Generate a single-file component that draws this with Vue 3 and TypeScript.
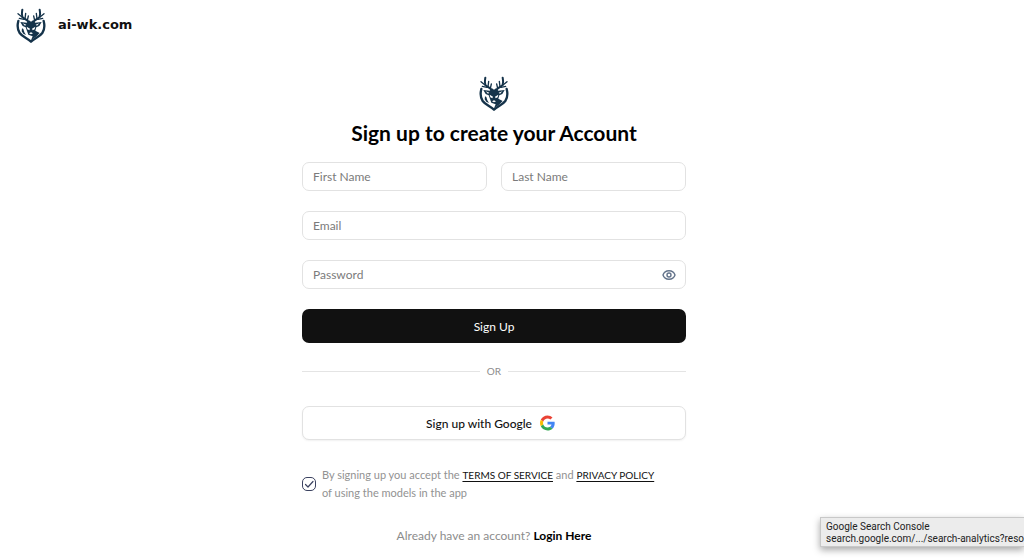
<script setup lang="ts">
import { ref } from 'vue'

const firstName = ref('')
const lastName = ref('')
const email = ref('')
const password = ref('')
const showPassword = ref(false)
const accepted = ref(true)
</script>

<template>
  <div class="page">
    <svg class="symbols" aria-hidden="true">
      <symbol id="stag" viewBox="0 0 90 108">
        <g fill="none" stroke="#15334a" stroke-linecap="round" stroke-linejoin="round">
          <path stroke-width="7" d="M7 42C4 54 4 68 11 78C19 89 34 93 45 104C56 93 71 89 79 78C86 68 86 54 83 42" />
          <path stroke-width="6" d="M38 46C35 36 24 38 19 29C16 22 18 16 19 8M52 46C55 36 66 38 71 29C74 22 72 16 71 8" />
          <path stroke-width="4" d="M18 30L6 20M27 36L29 19M34 40L37 27M72 30L84 20M63 36L61 19M56 40L53 27M24 37L10 34M66 37L80 34" />
        </g>
        <path fill="#15334a" d="M13 45L32 47L39 40L45 44L51 40L58 47L77 45L70 57L61 61L58 71L71 78L60 89L45 100L50 88L37 83L33 72L29 61L20 57Z" />
        <path fill="#15334a" d="M18 64L22 66L25 76L30 84L22 80L17 73Z" />
        <path fill="#fff" d="M20 49L31 53L27 56ZM70 49L59 53L63 56ZM32 59L42 65L40 70L34 67ZM58 59L48 65L50 70L56 67ZM39 79L45 76L51 79L45 82Z" />
      </symbol>
    </svg>

    <header class="top">
      <a class="brand" href="#">
        <svg class="stag" aria-hidden="true"><use href="#stag" /></svg>
        <span>ai-wk.com</span>
      </a>
    </header>

    <main class="main">
      <form class="form" @submit.prevent>
        <svg class="stag" aria-hidden="true"><use href="#stag" /></svg>
        <h1>Sign up to create your Account</h1>

        <div class="fields">
          <div class="names">
            <input v-model="firstName" class="field" type="text" placeholder="First Name" aria-label="First Name" />
            <input v-model="lastName" class="field" type="text" placeholder="Last Name" aria-label="Last Name" />
          </div>
          <input v-model="email" class="field" type="email" placeholder="Email" aria-label="Email" />
          <div class="password">
            <input v-model="password" class="field" :type="showPassword ? 'text' : 'password'" placeholder="Password" aria-label="Password" />
            <button class="eye" type="button" aria-label="Show password" @click="showPassword = !showPassword">
              <svg viewBox="0 0 14 12" fill="none" stroke="#64748b" stroke-width="1.4" aria-hidden="true">
                <path d="M1 6C2 3 4.300 1.800 7 1.800S12 3 13 6C12 9 9.700 10.200 7 10.200S2 9 1 6Z" />
                <circle cx="7" cy="6" r="2" />
              </svg>
            </button>
          </div>
          <button class="submit" type="submit">Sign Up</button>
        </div>

        <div class="divider"><span>OR</span></div>

        <button class="google" type="button">
          <span>Sign up with Google</span>
          <svg viewBox="0 0 48 48" aria-hidden="true">
            <path fill="#ea4335" d="M24 9.500c3.540 0 6.710 1.220 9.210 3.600l6.850-6.850C35.900 2.380 30.470 0 24 0 14.620 0 6.510 5.380 2.560 13.220l7.980 6.190C12.430 13.720 17.740 9.500 24 9.500z" />
            <path fill="#4285f4" d="M46.980 24.550c0-1.570-.15-3.090-.38-4.550H24v9.020h12.940c-.58 2.960-2.260 5.480-4.780 7.180l7.730 6c4.510-4.180 7.090-10.360 7.090-17.650z" />
            <path fill="#fbbc05" d="M10.530 28.590c-.48-1.450-.76-2.990-.76-4.590s.27-3.140.76-4.590l-7.980-6.190C.92 16.460 0 20.120 0 24s.92 7.540 2.560 10.780l7.970-6.190z" />
            <path fill="#34a853" d="M24 48c6.480 0 11.930-2.130 15.890-5.810l-7.730-6c-2.150 1.450-4.920 2.300-8.160 2.300-6.260 0-11.570-4.220-13.470-9.910l-7.980 6.190C6.510 42.620 14.620 48 24 48z" />
          </svg>
        </button>

        <div class="terms">
          <span class="check">
            <input id="accept" v-model="accepted" type="checkbox" />
            <svg v-if="accepted" viewBox="0 0 14 14" fill="none" stroke="#3b4260" stroke-width="1.2" stroke-linecap="round" stroke-linejoin="round" aria-hidden="true">
              <path d="M3.500 7.500L6 10L11 4.500" />
            </svg>
          </span>
          <label for="accept">
            By signing up you accept the <a href="#">TERMS OF SERVICE</a> and <a href="#">PRIVACY POLICY</a><br />
            of using the models in the app
          </label>
        </div>

        <p class="login">Already have an account? <a href="#">Login Here</a></p>
      </form>
    </main>

    <aside class="tip">
      <div>Google Search Console</div>
      <div>search.google.com/.../search-analytics?reso</div>
    </aside>
  </div>
</template>

<style>
body {
  background: #fff;
}
</style>

<style scoped>
.page {
  position: relative;
  min-height: 100vh;
  overflow: hidden;
  box-sizing: border-box;
  font-family: Lato, "Open Sans", sans-serif;
  font-size: 12px;
  color: #111;
}
.page *,
.page *::before,
.page *::after {
  box-sizing: border-box;
}
.symbols {
  position: absolute;
  width: 0;
  height: 0;
}
.stag {
  display: block;
  width: 30px;
  height: 36px;
}
.top {
  display: flex;
  padding: 7px 16px 0;
}
.brand {
  display: flex;
  align-items: center;
  gap: 12px;
  color: #111;
  text-decoration: none;
  font-family: "DejaVu Sans", sans-serif;
  font-size: 13px;
  line-height: 14px;
  font-weight: 700;
}
.main {
  display: flex;
  justify-content: center;
  padding: 32px 36px 0 0;
}
.form {
  display: flex;
  flex-direction: column;
  align-items: center;
  width: 384px;
  max-width: 100%;
}
h1 {
  margin: 8px 0 15px;
  font-size: 21px;
  line-height: 28px;
  font-weight: 700;
  color: #000;
  white-space: nowrap;
}
.fields {
  display: flex;
  flex-direction: column;
  gap: 20px;
  width: 100%;
}
.names {
  display: grid;
  grid-template-columns: 1fr 1fr;
  gap: 14px;
}
.field {
  display: block;
  width: 100%;
  min-width: 0;
  height: 29px;
  padding: 0 10px;
  border: 1px solid #e2e2e2;
  border-radius: 7px;
  background: #fff;
  color: #111;
  font: inherit;
  outline: none;
}
.field::placeholder {
  color: #7b7b7b;
  opacity: 1;
}
.password {
  position: relative;
}
.eye {
  position: absolute;
  top: 0;
  right: 10px;
  display: flex;
  align-items: center;
  height: 100%;
  padding: 0;
  border: 0;
  background: none;
}
.eye svg {
  width: 14px;
  height: 12px;
}
.submit,
.google {
  width: 100%;
  height: 34px;
  padding: 0;
  border-radius: 7px;
  font: inherit;
}
.submit {
  border: 0;
  background: #111;
  color: #fff;
}
.divider {
  display: flex;
  align-items: center;
  gap: 7px;
  width: 100%;
  margin: 20px 0 27px;
  font-size: 10px;
  line-height: 16px;
  color: #8c8c8c;
}
.divider::before,
.divider::after {
  content: "";
  flex: 1;
  height: 1px;
  background: #e4e4e4;
}
.google {
  display: flex;
  align-items: center;
  justify-content: center;
  gap: 8px;
  padding-right: 7px;
  border: 1px solid #e2e2e2;
  background: #fff;
  color: #111;
  font-weight: 500;
  box-shadow: 0 1px 2px rgba(0, 0, 0, 0.06);
}
.google svg {
  width: 15px;
  height: 16px;
}
.terms {
  display: flex;
  align-items: center;
  gap: 6px;
  width: 100%;
  margin-top: 26px;
  font-size: 11px;
  line-height: 18px;
  color: #929292;
  white-space: nowrap;
}
.terms a {
  color: #111;
  font-size: 10px;
  text-underline-offset: 2px;
}
.check {
  position: relative;
  flex: none;
  width: 14px;
  height: 14px;
}
.check input {
  display: block;
  appearance: none;
  width: 14px;
  height: 14px;
  margin: 0;
  border: 1px solid #3b4260;
  border-radius: 5px;
}
.check svg {
  position: absolute;
  inset: 0;
  pointer-events: none;
}
.login {
  margin: 25px 0 0;
  line-height: 18px;
  color: #8c8c8c;
}
.login a {
  color: #000;
  font-weight: 700;
  text-decoration: none;
}
.tip {
  position: absolute;
  right: 0;
  bottom: 12px;
  padding: 3px 0 1px 5px;
  border: 1px solid #c8c8c8;
  border-right: 0;
  background: #ececec;
  box-shadow: 0 3px 7px rgba(0, 0, 0, 0.35);
  color: #222;
  font-family: Roboto, sans-serif;
  font-size: 10px;
  line-height: 12px;
  white-space: nowrap;
}
</style>
